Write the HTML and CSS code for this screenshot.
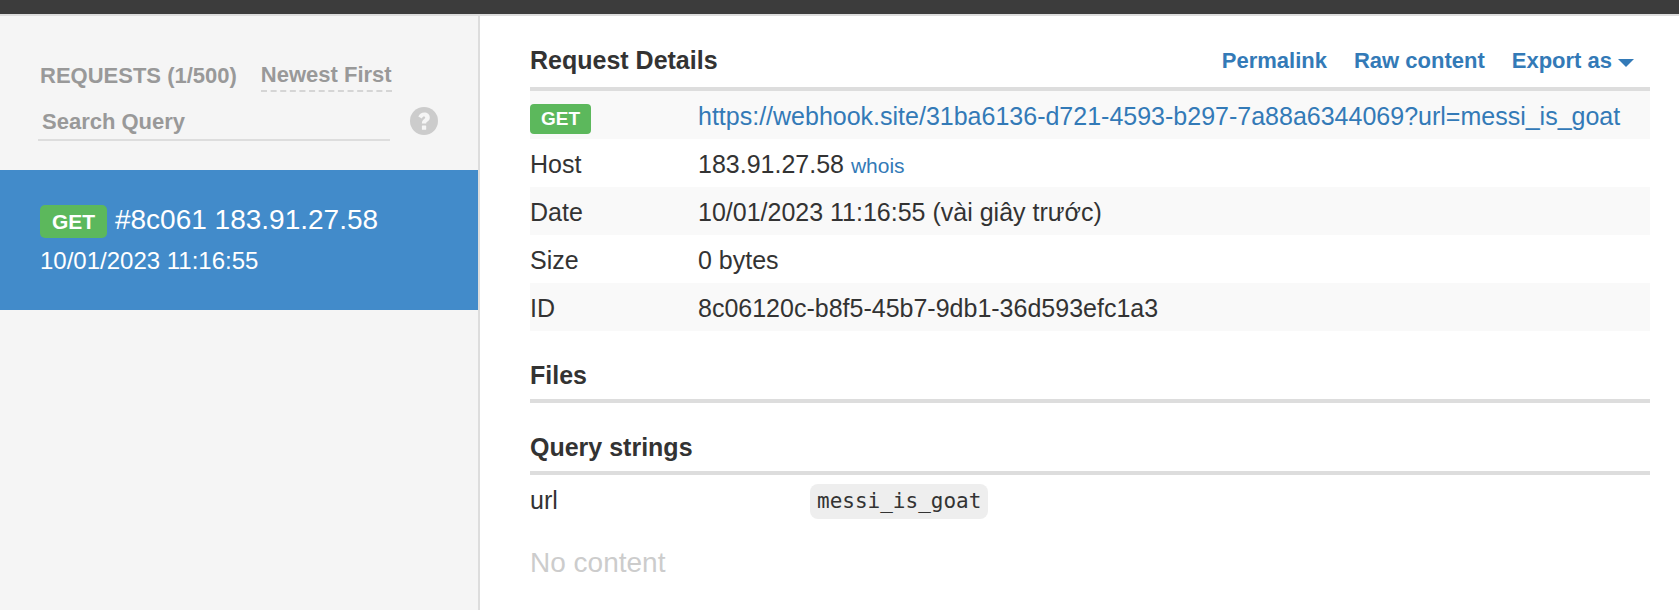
FILE: index.html
```html
<!DOCTYPE html>
<html lang="en">
<head>
<meta charset="utf-8">
<title>Webhook requests</title>
<link rel="stylesheet" href="styles.css">
</head>
<body>
<div class="topbar"></div>
<div class="layout">
  <aside class="sidebar">
    <div class="filters">
      <div class="filters-row">
        <h2 class="filters-title">REQUESTS (1/500)</h2>
        <button class="sort" type="button">Newest First</button>
      </div>
      <div class="search-row">
        <input class="search" type="text" placeholder="Search Query" aria-label="Search Query">
        <button class="help" type="button" aria-label="Search help">
          <svg class="help-icon" viewBox="0 0 28 28" aria-hidden="true">
            <circle cx="14" cy="14" r="14" fill="#ccc"/>
            <path d="M8.3 9.6C9.7 6.8 11.5 5.6 14.3 5.6c3 0 5.5 2 5.5 4.8 0 2.1-1 3.1-2.6 4.3-.9.7-1 .9-1 1.9h-4.3c0-2.3.6-3.2 2.3-4.5.8-.6 1-.9 1-1.5 0-.7-.5-1.1-1.2-1.1-.9 0-1.500.6-2.200 1.900z" fill="#f5f5f5"/>
            <rect x="11.9" y="18.6" width="4.3" height="4.2" rx=".5" fill="#f5f5f5"/>
          </svg>
        </button>
      </div>
    </div>
    <a class="request" href="#8c061">
      <span class="request-head"><span class="badge badge-large">GET</span> #8c061 183.91.27.58</span>
      <span class="request-date">10/01/2023 11:16:55</span>
    </a>
  </aside>
  <main class="content">
    <section class="section">
      <header class="section-head section-head-main">
        <h2 class="section-title">Request Details</h2>
        <nav class="actions">
          <a href="#permalink">Permalink</a>
          <a href="#raw">Raw content</a>
          <a class="export" href="#export">Export as<span class="caret"></span></a>
        </nav>
      </header>
      <table class="details">
        <tr><th scope="row"><span class="badge">GET</span></th><td><a href="#url">https://webhook.site/31ba6136-d721-4593-b297-7a88a6344069?url=messi_is_goat</a></td></tr>
        <tr><th scope="row">Host</th><td>183.91.27.58 <a class="whois" href="#whois">whois</a></td></tr>
        <tr><th scope="row">Date</th><td>10/01/2023 11:16:55 (vài giây trước)</td></tr>
        <tr><th scope="row">Size</th><td>0 bytes</td></tr>
        <tr><th scope="row">ID</th><td>8c06120c-b8f5-45b7-9db1-36d593efc1a3</td></tr>
      </table>
    </section>
    <section class="section">
      <header class="section-head"><h2 class="section-title">Files</h2></header>
    </section>
    <section class="section">
      <header class="section-head"><h2 class="section-title">Query strings</h2></header>
      <table class="query">
        <tr><th scope="row">url</th><td><code class="value">messi_is_goat</code></td></tr>
      </table>
    </section>
    <p class="empty">No content</p>
  </main>
</div>
</body>
</html>
```
FILE: styles.css
```css
* { box-sizing: border-box; }

body {
  margin: 0;
  min-height: 100vh;
  display: flex;
  flex-direction: column;
  background: #fff;
  color: #333;
  font-family: "Liberation Sans", Arial, sans-serif;
  font-size: 25px;
  line-height: 36px;
}

a { color: #337ab7; text-decoration: none; }
h2, p { margin: 0; }

.topbar {
  height: 16px;
  background: #3c3c3c;
  border-bottom: 2px solid #ddd;
}

.layout { flex: 1; display: flex; }

.sidebar {
  flex: 0 0 480px;
  background: #f5f5f5;
  border-right: 2px solid #ddd;
}

.filters { padding: 44px 40px 29px 38px; }

.filters-row {
  display: flex;
  align-items: flex-start;
  gap: 24px;
  padding-left: 2px;
}

.filters-title {
  padding-top: 1px;
  color: #999;
  font-size: 22px;
  line-height: 30px;
}

.sort {
  padding: 0;
  border: 0;
  border-bottom: 2px dashed #d5d5d5;
  background: none;
  color: #999;
  font: bold 22px/30px "Liberation Sans", Arial, sans-serif;
}

.search-row {
  display: flex;
  align-items: center;
  gap: 20px;
  margin-top: 9px;
}

.search {
  flex: 1;
  min-width: 0;
  height: 40px;
  padding: 3px 4px 0;
  border: 0;
  border-bottom: 2px solid #ddd;
  background: none;
  color: #555;
  font: bold 22px "Liberation Sans", Arial, sans-serif;
}
.search::placeholder { color: #999; opacity: 1; }

.help {
  width: 28px;
  height: 28px;
  padding: 0;
  border: 0;
  background: none;
}
.help-icon { display: block; width: 28px; height: 28px; }

.request {
  display: block;
  padding: 28px 40px 30px;
  background: #428bca;
  color: #fff;
}
.request-head, .request-date { display: block; }
.request-head { font-size: 28px; line-height: 44px; }
.request-date { font-size: 24px; line-height: 38px; }

.badge {
  display: inline-block;
  padding: 0 11px;
  border-radius: 4px;
  background: #5cb85c;
  color: #fff;
  font-size: 19px;
  font-weight: bold;
  line-height: 30px;
}
.badge-large {
  padding: 0 12px;
  border-radius: 5px;
  font-size: 21px;
  line-height: 33px;
}

.content { flex: 1; min-width: 0; padding: 0 29px 24px 50px; }

.section { padding-top: 26px; }

.section-head {
  display: flex;
  justify-content: space-between;
  padding-bottom: 6px;
  border-bottom: 4px solid #ddd;
}
.section-head-main { padding-bottom: 9px; }
.section-title { font-size: 25px; line-height: 36px; }

.actions {
  display: flex;
  gap: 27px;
  padding: 2px 16px 0 0;
  font-size: 22px;
  font-weight: bold;
  line-height: 34px;
}
.export { display: flex; align-items: center; gap: 6px; }
.caret {
  margin-top: 4px;
  border: 8px solid transparent;
  border-top-color: #337ab7;
  border-bottom: 0;
}

.details, .query {
  width: 100%;
  border-collapse: collapse;
  table-layout: fixed;
}
th, td {
  height: 48px;
  padding: 2px 0 0;
  text-align: left;
  font-weight: normal;
  line-height: 36px;
  vertical-align: middle;
}
.details th { width: 15%; }
.details tr:nth-child(odd) { background: #f9f9f9; }
.query th { width: 25%; }
.whois { font-size: 21px; line-height: 1; }

.value {
  display: inline-block;
  padding: 0 7px;
  border-radius: 8px;
  background: #eee;
  font: 21px/35px "DejaVu Sans Mono", monospace;
  vertical-align: middle;
}

.empty { padding-top: 22px; color: #ccc; font-size: 28px; }
```
